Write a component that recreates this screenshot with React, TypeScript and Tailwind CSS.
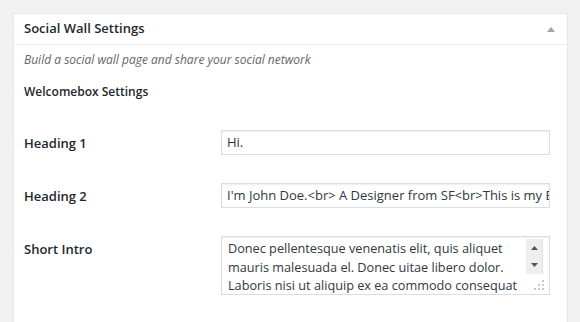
import React from "react";

const font = { fontFamily: '"Open Sans", "Noto Sans", Arial, sans-serif' };

type RowProps = {
  label: string;
  children: React.ReactNode;
};

const Row = ({ label, children }: RowProps) => (
  <div className="flex items-start">
    <div className="w-[197px] shrink-0 pt-[4px] text-[13px] leading-[18px] font-semibold text-[#23282d]">{label}</div>
    {children}
  </div>
);

const TextInput = ({ value }: { value: string }) => (
  <div className="w-[329px] h-[25px] border border-[#ddd] shadow-[inset_0_1px_2px_rgba(0,0,0,0.07)] bg-white px-[5px] text-[13px] leading-[23px] text-[#32373c] overflow-hidden whitespace-nowrap">
    {value}
  </div>
);

const Grip = () => (
  <svg width="14" height="14" viewBox="0 0 14 14" className="absolute right-[3px] bottom-[2px]">
    {[
      [10, 2],
      [6, 6],
      [10, 6],
      [2, 10],
      [6, 10],
      [10, 10],
    ].map(([x, y]) => (
      <rect key={`${x}-${y}`} x={x} y={y} width="2" height="2" fill="#c8c8c8" />
    ))}
  </svg>
);

const ScrollBar = () => (
  <div className="absolute right-[6px] top-[2px] w-[17px] h-[35px] bg-[#eeeeee] border-r border-[#e2e2e2] flex flex-col items-center justify-between py-[7px]">
    <svg width="7" height="4" viewBox="0 0 7 4">
      <polygon points="3.5,0 7,4 0,4" fill="#555" />
    </svg>
    <svg width="7" height="4" viewBox="0 0 7 4">
      <polygon points="0,0 7,0 3.5,4" fill="#555" />
    </svg>
  </div>
);

export default function App() {
  return (
    <div className="min-h-[322px] bg-[#f1f1f1] pt-[13px] pl-[13px] pr-[12px]" style={font}>
      <div className="bg-white border border-[#e5e5e5] shadow-[0_1px_1px_rgba(0,0,0,0.04)] pb-[40px]">
        <div className="h-[31px] border-b border-[#eee] flex items-center justify-between pl-[10px] pr-[12px]">
          <h2 className="text-[13px] font-semibold text-[#23282d]">Social Wall Settings</h2>
          <svg width="8" height="5" viewBox="0 0 8 5">
            <polygon points="4,0 8,5 0,5" fill="#a0a5aa" />
          </svg>
        </div>
        <div className="px-[10px]">
          <p className="mt-[5px] text-[12px] leading-[20px] italic text-[#666]">
            Build a social wall page and share your social network
          </p>
          <h3 className="mt-[12px] text-[12px] leading-[20px] font-semibold text-[#23282d]">Welcomebox Settings</h3>
          <div className="mt-[28px] flex flex-col gap-[28px]">
            <Row label="Heading 1">
              <TextInput value="Hi." />
            </Row>
            <Row label="Heading 2">
              <TextInput value="I'm John Doe.<br> A Designer from SF<br>This is my Blog" />
            </Row>
            <Row label="Short Intro">
              <div className="relative w-[329px] h-[59px] border border-[#ddd] shadow-[inset_0_1px_2px_rgba(0,0,0,0.07)] bg-white pl-[6px] pt-[2px] text-[12.7px] leading-[18.5px] text-[#32373c] overflow-hidden">
                <div className="whitespace-nowrap">Donec pellentesque venenatis elit, quis aliquet</div>
                <div className="whitespace-nowrap">mauris malesuada el. Donec uitae libero dolor.</div>
                <div className="whitespace-nowrap">Laboris nisi ut aliquip ex ea commodo consequat</div>
                <ScrollBar />
                <Grip />
              </div>
            </Row>
          </div>
        </div>
      </div>
    </div>
  );
}
